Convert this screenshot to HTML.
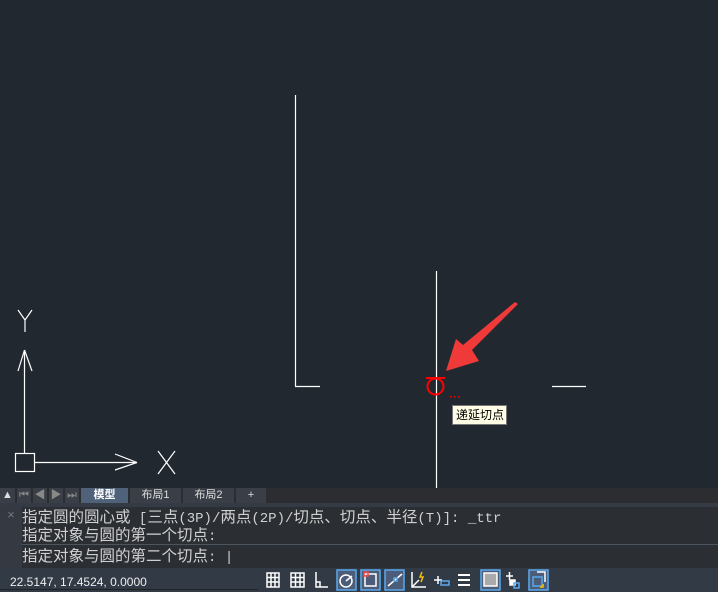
<!DOCTYPE html>
<html><head><meta charset="utf-8"><style>
*{margin:0;padding:0;box-sizing:border-box}
body{width:718px;height:592px;background:#212830;position:relative;overflow:hidden;font-family:"Liberation Sans","Noto Sans CJK SC",sans-serif}
.abs{position:absolute}
.tb{position:absolute;top:488px;height:15px;background:#3a3f47;color:#ddd;font-size:11px;text-align:center;line-height:15px}
.cmd{font-family:"Noto Sans CJK SC",monospace;font-size:15.5px;color:#d0d0d0;position:absolute;left:22px;line-height:18px;white-space:nowrap}
.cmd i{font-style:normal;font-family:"Liberation Mono",monospace;font-size:14px}
</style></head><body>
<svg class="abs" style="left:0;top:0" width="718" height="488">
<g stroke="#fff" stroke-width="1.2" fill="none">
<line x1="295.5" y1="95" x2="295.5" y2="386"/><line x1="295" y1="386.5" x2="320" y2="386.5"/>
<line x1="436.5" y1="271" x2="436.5" y2="488"/>
<line x1="552" y1="386.5" x2="586" y2="386.5"/>
<line x1="24.5" y1="350" x2="24.5" y2="454"/>
<line x1="18" y1="371" x2="24.5" y2="350"/><line x1="32" y1="371" x2="24.5" y2="350"/>
<rect x="15.5" y="453.5" width="19" height="18"/>
<line x1="34" y1="462.5" x2="137" y2="462.5"/>
<line x1="115" y1="454" x2="137" y2="462.5"/><line x1="115" y1="470" x2="137" y2="462.5"/>
<line x1="18" y1="310" x2="25" y2="320"/><line x1="32" y1="310" x2="25" y2="320"/><line x1="25" y1="320" x2="25" y2="332"/>
<line x1="158" y1="451" x2="175" y2="474"/><line x1="175" y1="451" x2="158" y2="474"/>
</g>
<circle cx="435.5" cy="386.5" r="8" stroke="#f00" stroke-width="2" fill="none"/>
<line x1="426" y1="378" x2="445" y2="378" stroke="#f00" stroke-width="2"/>
<g fill="#f00"><rect x="450" y="396" width="1.5" height="1.5"/><rect x="454" y="396" width="1.5" height="1.5"/><rect x="458" y="396" width="1.5" height="1.5"/></g>
<polygon points="518,304 472,350 479,361 446,371 456,339 463,345 515,302" fill="#f03a3a"/>
</svg>
<div class="abs" style="left:452px;top:405px;width:55px;height:20px;background:#fffde6;border:1px solid #777;font-size:12px;line-height:18px;padding-left:3px;color:#000">递延切点</div>
<div class="abs" style="left:0;top:488px;width:718px;height:15px;background:#2b2d31"></div>
<div class="tb" style="left:0;width:15px;background:#3a3f47">▲</div>
<div class="tb" style="left:17px;width:14px;color:#888">⏮</div>
<div class="tb" style="left:33px;width:14px;color:#888">◀</div>
<div class="tb" style="left:49px;width:14px;color:#888">▶</div>
<div class="tb" style="left:65px;width:14px;color:#888">⏭</div>
<div class="tb" style="left:81px;width:47px;background:#50627a;font-weight:bold;color:#fff">模型</div>
<div class="tb" style="left:130px;width:51px">布局1</div>
<div class="tb" style="left:183px;width:51px">布局2</div>
<div class="tb" style="left:236px;width:30px">+</div>
<div class="abs" style="left:0;top:503px;width:718px;height:4px;background:#353b45"></div>
<div class="abs" style="left:0;top:507px;width:718px;height:61px;background:#2b2e33"></div>
<div class="abs" style="left:0;top:507px;width:22px;height:61px;background:#353a42;color:#777;font-size:13px;text-align:center">×</div>
<div class="abs" style="left:22px;top:544px;width:696px;height:1px;background:#4a5560"></div>
<div class="cmd" style="top:507px">指定圆的圆心或<i> [</i>三点<i>(3P)/</i>两点<i>(2P)/</i>切点、切点、半径<i>(T)]: _ttr</i></div>
<div class="cmd" style="top:525px">指定对象与圆的第一个切点<i>:</i></div>
<div class="cmd" style="top:546px">指定对象与圆的第二个切点<i>: |</i></div>
<div class="abs" style="left:0;top:568px;width:718px;height:24px;background:#323a46"></div>
<div class="abs" style="left:10px;top:575px;font-size:12px;color:#eee;font-family:'Liberation Sans',sans-serif">22.5147, 17.4524, 0.0000</div>
<div class="abs" style="left:0;top:589px;width:258px;height:1px;background:#222"></div>
<svg class="abs" style="left:260px;top:568px" width="300" height="24" fill="none" stroke="#fff" stroke-width="1.5">
<rect x="77" y="2" width="19" height="20" fill="#4b5d78" stroke="#5aa9ee"/>
<rect x="101" y="2" width="19" height="20" fill="#4b5d78" stroke="#5aa9ee"/>
<rect x="125" y="2" width="19" height="20" fill="#4b5d78" stroke="#5aa9ee"/>
<rect x="221" y="2" width="19" height="20" fill="#4b5d78" stroke="#5aa9ee"/>
<rect x="269" y="2" width="19" height="20" fill="#4b5d78" stroke="#5aa9ee"/>
<path d="M7 5h12v14H7zM7 9.5h12M7 14h12M11 5v14M15 5v14"/>
<path d="M31 5h13v14H31zM31 9.5h13M31 14h13M35.5 5v14M40 5v14"/>
<path d="M56 4v15h12M56 14h4v5"/>
<circle cx="86" cy="13" r="6"/><path d="M86 13l6-5"/>
<rect x="105" y="6" width="11" height="12"/><rect x="104" y="4" width="4" height="4" stroke="#f44"/>
<path d="M128 18l14-12"/><rect x="134" y="10" width="3" height="3" stroke="#5aa9ee"/>
<path d="M152 4v15h14M152 19l7-7" /><path d="M162 4l-2 5h3l-2 5" stroke="#f5c000"/>
<path d="M174 12h8M178 8v8"/><rect x="181" y="13" width="8" height="4" stroke="#5aa9ee"/>
<path d="M198 7h12M198 12h12M198 17h12" stroke-width="2"/>
<rect x="224" y="5" width="13" height="13" fill="#aaa" stroke="#fff"/>
<path d="M246 8h7M249.5 4v8"/><rect x="250" y="12" width="5" height="5" fill="#fff"/><rect x="254" y="15" width="5" height="5" stroke="#5aa9ee"/>
<rect x="273" y="9" width="9" height="9" stroke="#5aa9ee"/><path d="M277 4h8v10" /><path d="M283 16v3h-3" stroke="#f5c000"/>
</svg>
</body></html>
